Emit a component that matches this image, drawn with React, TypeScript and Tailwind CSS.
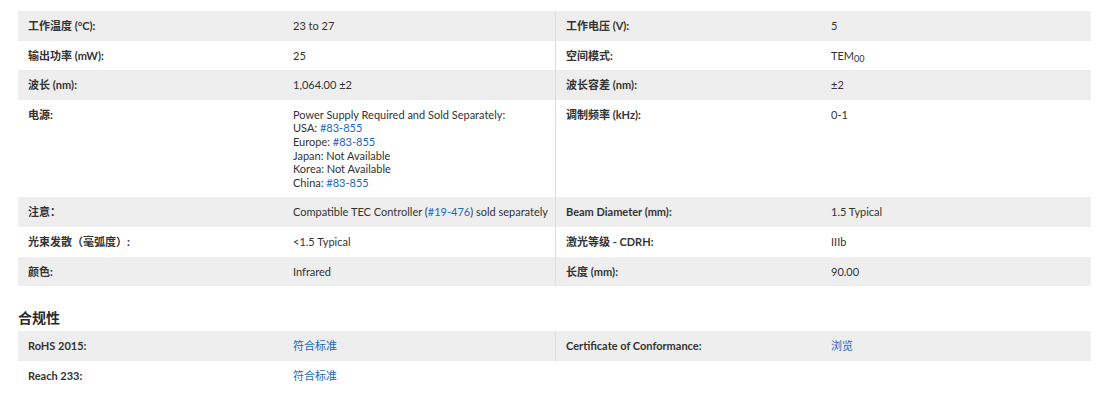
const font = "font-['Lato','Noto_Sans_CJK_SC',sans-serif]";

type Cell = { label: React.ReactNode; value: React.ReactNode };
type Row = { left: Cell; right?: Cell };

const A = ({ children }: { children: React.ReactNode }) => (
  <a className="text-[#1b68c2]">{children}</a>
);

const specs: Row[] = [
  { left: { label: "工作温度 (°C):", value: "23 to 27" }, right: { label: "工作电压 (V):", value: "5" } },
  {
    left: { label: "输出功率 (mW):", value: "25" },
    right: {
      label: "空间模式:",
      value: (
        <>
          TEM<sub className="text-[9px]">00</sub>
        </>
      ),
    },
  },
  { left: { label: "波长 (nm):", value: "1,064.00 ±2" }, right: { label: "波长容差 (nm):", value: "±2" } },
  {
    left: {
      label: "电源:",
      value: (
        <>
          Power Supply Required and Sold Separately:
          <br />
          USA: <A>#83-855</A>
          <br />
          Europe: <A>#83-855</A>
          <br />
          Japan: Not Available
          <br />
          Korea: Not Available
          <br />
          China: <A>#83-855</A>
        </>
      ),
    },
    right: { label: "调制频率 (kHz):", value: "0-1" },
  },
  {
    left: {
      label: "注意：",
      value: (
        <>
          Compatible TEC Controller (<A>#19-476</A>) sold separately
        </>
      ),
    },
    right: { label: "Beam Diameter (mm):", value: "1.5 Typical" },
  },
  { left: { label: "光束发散（毫弧度）:", value: "<1.5 Typical" }, right: { label: "激光等级 - CDRH:", value: "IIIb" } },
  { left: { label: "颜色:", value: "Infrared" }, right: { label: "长度 (mm):", value: "90.00" } },
];

const compliance: Row[] = [
  {
    left: { label: "RoHS 2015:", value: <A>符合标准</A> },
    right: { label: "Certificate of Conformance:", value: <A>浏览</A> },
  },
  { left: { label: "Reach 233:", value: <A>符合标准</A> } },
];

function Half({ cell, divider }: { cell?: Cell; divider?: boolean }) {
  return (
    <div className={`grid grid-cols-[265px_1fr] ${divider && cell ? "border-l border-[#dddddd]" : ""}`}>
      {cell && (
        <>
          <div className="py-2 pl-[10px] font-bold">{cell.label}</div>
          <div className="py-2 pl-[10px]">{cell.value}</div>
        </>
      )}
    </div>
  );
}

function SpecTable({ rows }: { rows: Row[] }) {
  return (
    <div>
      {rows.map((r, i) => (
        <div key={i} className={`grid grid-cols-[537px_1fr] ${i % 2 === 0 ? "bg-[#eeeeee]" : "bg-white"}`}>
          <Half cell={r.left} />
          <Half cell={r.right} divider />
        </div>
      ))}
    </div>
  );
}

export default function App() {
  return (
    <div className={`${font} bg-white pl-[18px] pr-[8px] pt-[11px] pb-4 text-[11px] leading-[13.6px] text-[#333333]`}>
      <SpecTable rows={specs} />
      <h3 className="mt-[22px] mb-[3px] text-[14px] font-semibold leading-[20px] text-[#2a2a2a]">合规性</h3>
      <SpecTable rows={compliance} />
    </div>
  );
}
